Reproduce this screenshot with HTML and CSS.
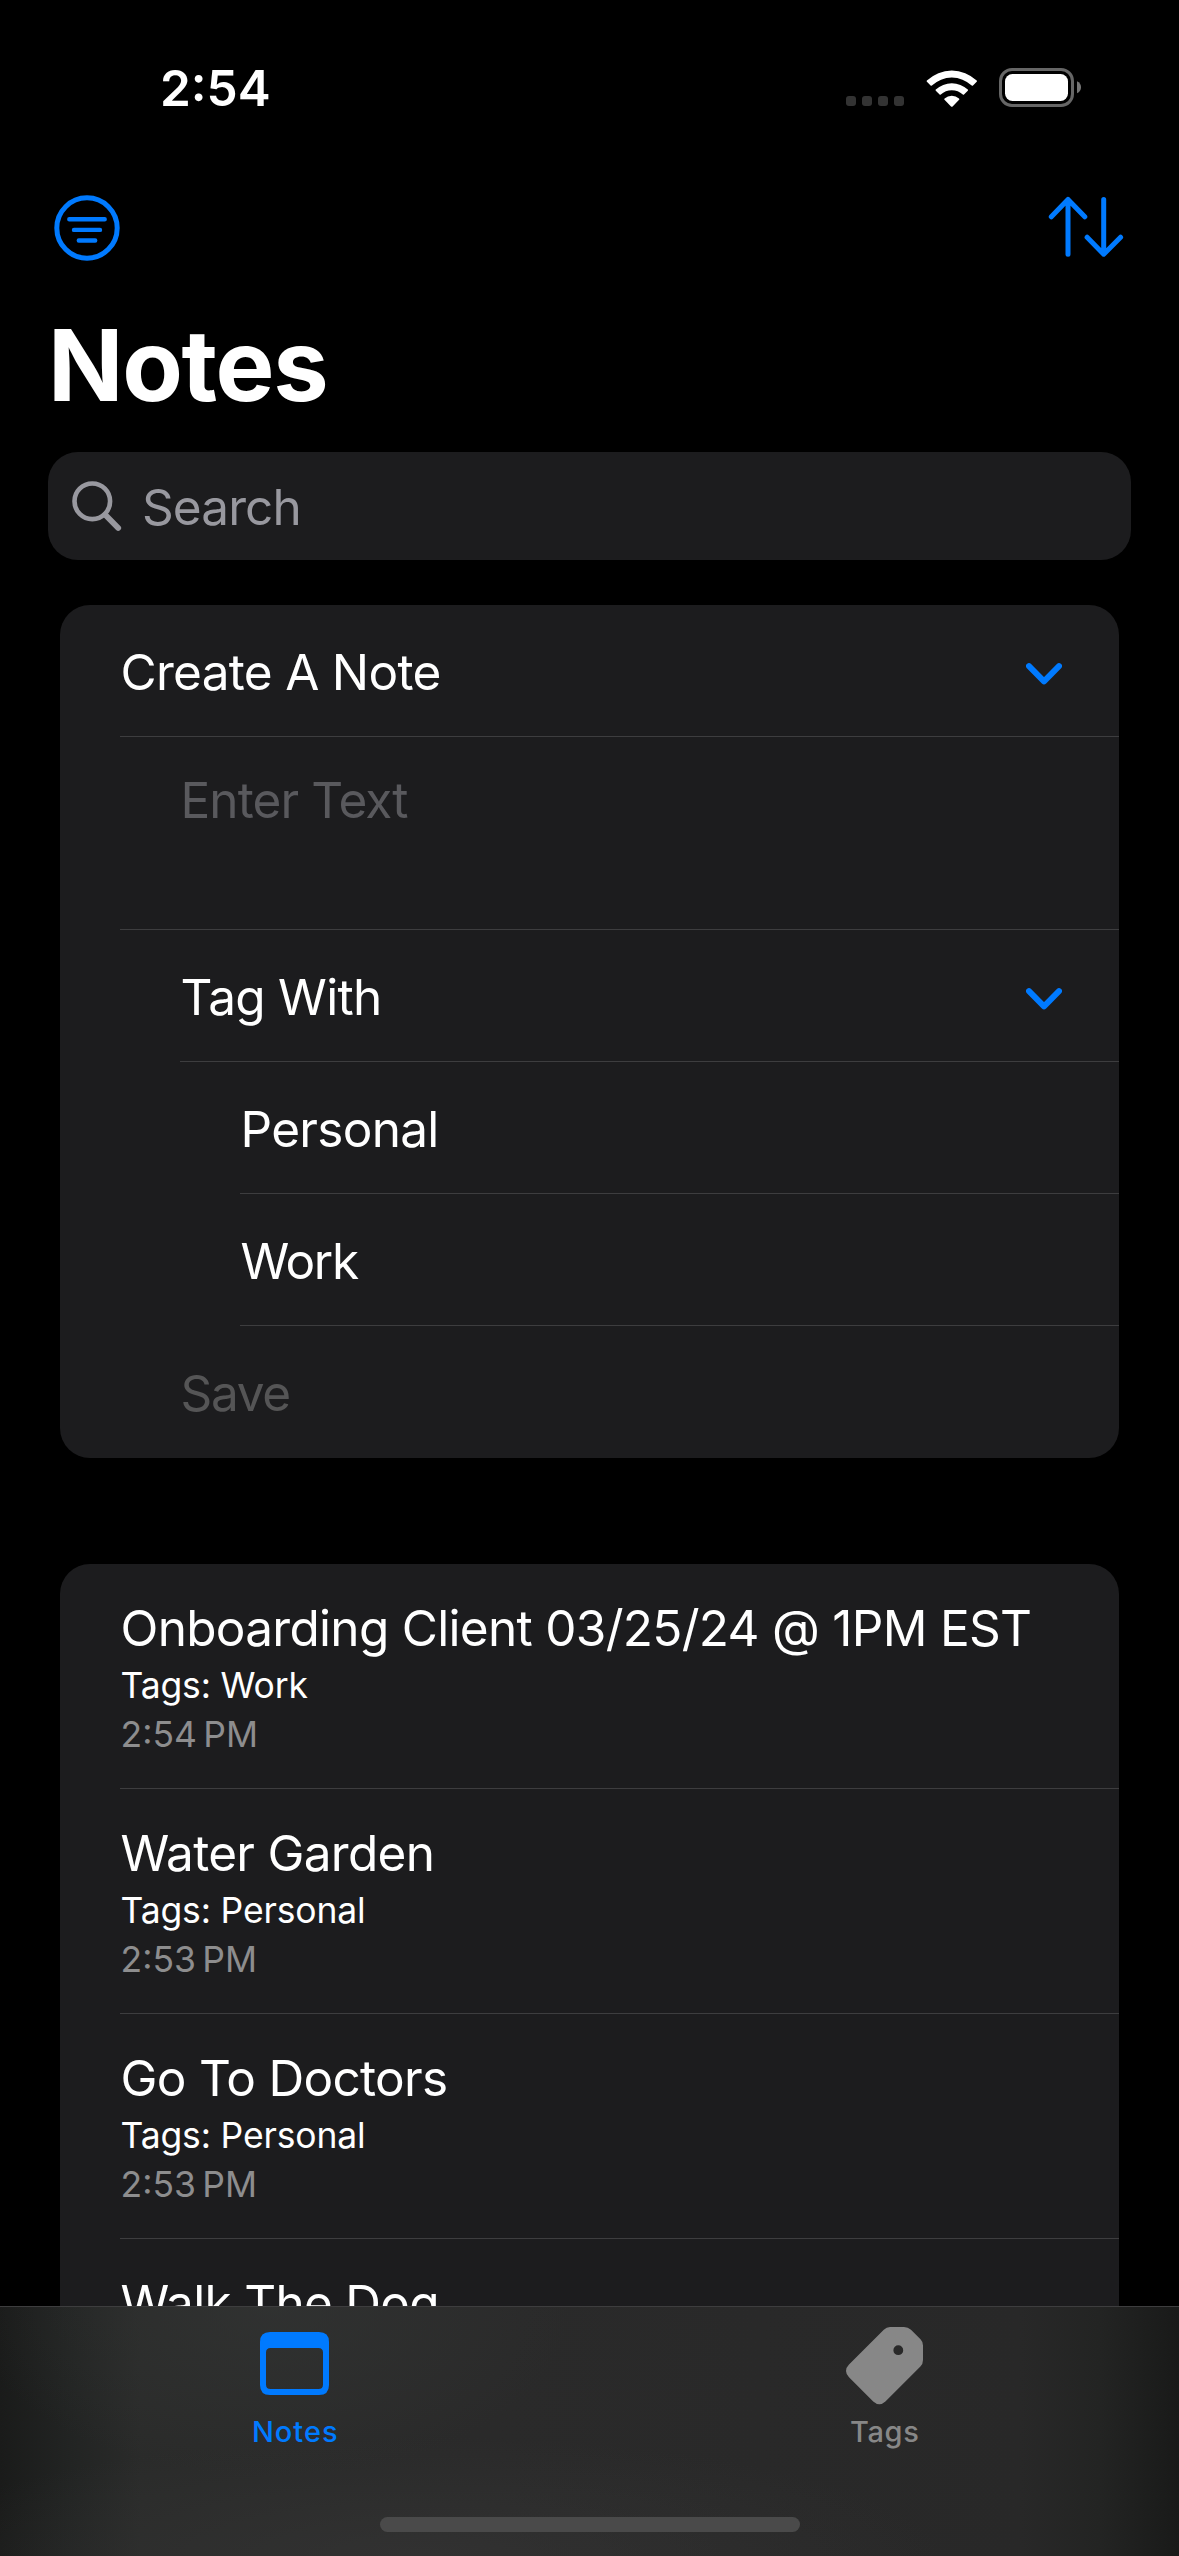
FILE: index.html
```html
<!DOCTYPE html>
<html lang="en">
<head>
<meta charset="utf-8">
<title>Notes</title>
<link rel="stylesheet" href="styles.css">
</head>
<body>
<div class="screen">
  <header class="status-bar">
    <span class="clock">2:54</span>
    <div class="indicators">
      <svg class="signal" width="58" height="10" viewBox="0 0 58 10">
        <rect width="10" height="10" rx="3"/><rect x="16" width="10" height="10" rx="3"/><rect x="32" width="10" height="10" rx="3"/><rect x="48" width="10" height="10" rx="3"/>
      </svg>
      <svg class="wifi" width="52" height="39" viewBox="0 0 52 39">
        <path d="M.9 11.6A36 36 0 0 1 50.7 11.6Q51.2 12.2 50.7 12.8L47 16.6Q46.4 17.1 45.7 16.5A29 29 0 0 0 5.9 16.5Q5.2 17.1 4.6 16.6L.9 12.8Q.4 12.2 .9 11.6Z"/>
        <path d="M9.8 20.6A23.5 23.5 0 0 1 41.8 20.6Q42.4 21.2 41.8 21.8L38 25.6Q37.4 26.1 36.8 25.6A16 16 0 0 0 14.8 25.6Q14.2 26.1 13.6 25.6L9.8 21.8Q9.2 21.2 9.8 20.6Z"/>
        <path d="M18.6 29.4A11 11 0 0 1 33 29.4Q33.8 30.1 33.1 30.8L26.6 37.4Q25.8 38.2 25 37.4L18.5 30.8Q17.8 30.1 18.6 29.4Z"/>
      </svg>
      <svg class="battery" width="82" height="39" viewBox="0 0 82 39">
        <rect class="shell" x="1.5" y="1.5" width="72" height="36" rx="11.5"/>
        <rect x="6" y="6" width="63" height="27" rx="7.5" fill="#fff"/>
        <path d="M78 13.3Q82 15.2 82 19.3T78 25.3Z" fill="#757575"/>
      </svg>
    </div>
  </header>

  <nav class="toolbar">
    <svg width="66" height="66" viewBox="0 0 66 66">
      <circle cx="33" cy="33" r="30.2"/>
      <path d="M15.3 24.3H50.7M20 34.9H46M24.8 45.5H41.2" stroke-width="4.4"/>
    </svg>
    <svg class="sort" width="76" height="62" viewBox="0 0 76 62">
      <path d="M20 58.2V4M3.3 20.8L20 3.4L36.8 20.8M55.7 3.4V57M39.1 41.2L55.7 58.2L72.6 41.2"/>
    </svg>
  </nav>

  <h1 class="title">Notes</h1>

  <div class="search">
    <svg width="50" height="51" viewBox="0 0 50 51">
      <circle cx="20.3" cy="20.3" r="17.8" stroke-width="4.6"/>
      <path d="M33.2 33.8L46.2 47" stroke-width="5.8"/>
    </svg>
    <span>Search</span>
  </div>

  <main class="content">
    <section class="card">
      <div class="row"><span>Create A Note</span>
        <svg class="chevron" width="36" height="22" viewBox="0 0 36 22"><path d="M3 3.2L18 18.3L33 3.2"/></svg>
      </div>
      <div class="row field"><span>Enter Text</span></div>
      <div class="row inset"><span>Tag With</span>
        <svg class="chevron" width="36" height="22" viewBox="0 0 36 22"><path d="M3 3.2L18 18.3L33 3.2"/></svg>
      </div>
      <div class="row deep"><span>Personal</span></div>
      <div class="row deep"><span class="snug">Work</span></div>
      <div class="row inset disabled"><span class="snug">Save</span></div>
    </section>

    <section class="card notes">
      <article class="note"><h2>Onboarding Client 03/25/24 @ 1PM EST</h2><p class="tags">Tags: Work</p><p class="time">2:54&#8239;PM</p></article>
      <article class="note"><h2>Water Garden</h2><p class="tags">Tags: Personal</p><p class="time">2:53&#8239;PM</p></article>
      <article class="note"><h2>Go To Doctors</h2><p class="tags">Tags: Personal</p><p class="time">2:53&#8239;PM</p></article>
      <article class="note"><h2>Walk The Dog</h2></article>
    </section>
  </main>

  <footer class="tab-bar">
    <div class="tabs">
      <div class="tab active">
        <svg width="77" height="78" viewBox="0 0 77 78">
          <path fill-rule="evenodd" d="M14 5H63Q73 5 73 15V58Q73 68 63 68H14Q4 68 4 58V15Q4 5 14 5ZM14.500 21Q10 21 10 25.500V57.500Q10 62 14.500 62H62.500Q67 62 67 57.500V25.500Q67 21 62.500 21Z"/>
        </svg>
        <span>Notes</span>
      </div>
      <div class="tab">
        <svg width="77" height="78" viewBox="0 0 77 78">
          <path fill-rule="evenodd" d="M44 0H58Q62 0 65 2.800L74.500 12.300Q77 14.800 77 18.500V33Q77 37 74.400 39.600L39.400 74.500Q33.400 80 27.200 74.500L3 50.300Q-3 43.800 3 37.600L37.800 2.800Q40.500 0 44 0ZM52.300 18.300a4.900 4.900 0 1 0 0 9.800a4.900 4.900 0 1 0 0-9.800Z"/>
        </svg>
        <span>Tags</span>
      </div>
    </div>
    <div class="home-indicator"></div>
  </footer>
</div>
</body>
</html>
```
FILE: styles.css
```css
* { box-sizing: border-box; }

body {
  margin: 0;
  background: #000;
  color: #fff;
  font-family: Inter, "Liberation Sans", sans-serif;
  font-size: 49.5px;
  letter-spacing: -0.7px;
}

h1, h2, p { margin: 0; font-weight: 400; }
svg { display: block; flex: none; }

.screen {
  width: 1179px;
  height: 2556px;
  display: flex;
  flex-direction: column;
  overflow: hidden;
}

.status-bar {
  height: 176px;
  flex: none;
  display: flex;
  justify-content: space-between;
  align-items: flex-start;
  padding: 68px 98px 0 160px;
}
.clock {
  font-weight: 600;
  letter-spacing: 0;
  line-height: 40px;
}
.indicators { display: flex; }
.signal { margin: 28px 21.5px 0 0; fill: #333; }
.wifi { margin: 1px 21.5px 0 0; fill: #fff; }
.shell { fill: none; stroke: #666; stroke-width: 3; }

.toolbar {
  height: 134px;
  flex: none;
  display: flex;
  justify-content: space-between;
  align-items: flex-start;
  padding: 18.5px 55px 0 53.5px;
  fill: none;
  stroke: #007aff;
  stroke-width: 5;
  stroke-linecap: round;
  stroke-linejoin: round;
}
.sort { margin-top: 1.5px; }

.title {
  margin-left: 48px;
  height: 142px;
  flex: none;
  font-size: 99px;
  font-weight: 700;
  line-height: 110px;
  letter-spacing: -1.3px;
}

.search {
  height: 108px;
  flex: none;
  margin: 0 48px 45px;
  display: flex;
  align-items: center;
  gap: 20px;
  padding-left: 24px;
  border-radius: 30px;
  background: #1c1c1e;
  color: #98989f;
  letter-spacing: -0.9px;
}
.search svg { fill: none; stroke: #98989f; stroke-linecap: round; }
.search span { padding-top: 2px; }

.content {
  flex: 1;
  min-height: 0;
  overflow: hidden;
  display: flex;
  flex-direction: column;
  gap: 106px;
  padding: 0 60px;
}
.card {
  flex: none;
  background: #1c1c1e;
  border-radius: 30px;
}
.row {
  height: 132px;
  margin-left: 60px;
  padding: 2px 57px 0 0.5px;
  display: flex;
  justify-content: space-between;
  align-items: center;
  border-bottom: 1px solid #3d3d3f;
}
.field {
  height: 193px;
  align-items: flex-start;
  padding: 33px 0 0 60.5px;
  line-height: 60px;
  color: #59595d;
  letter-spacing: -0.9px;
}
.inset { margin-left: 120px; }
.deep { margin-left: 180px; }
.disabled { border: 0; color: #555556; }
.snug { letter-spacing: -1.3px; }
.chevron {
  margin-top: 5px;
  fill: none;
  stroke: #007aff;
  stroke-width: 6;
  stroke-linecap: round;
  stroke-linejoin: round;
}

.note {
  height: 225px;
  margin-left: 60px;
  padding: 34px 0 0 0.5px;
  border-bottom: 1px solid #3d3d3f;
}
.note h2 { font-size: 49.5px; line-height: 60px; white-space: nowrap; }
.tags, .time { font-size: 35.5px; }
.tags { margin-top: 3px; line-height: 50px; letter-spacing: -0.15px; }
.time { line-height: 48px; letter-spacing: 0; color: #8d8d8e; }

.tab-bar {
  height: 250px;
  flex: none;
  display: flex;
  flex-direction: column;
  align-items: center;
  border-top: 1px solid #3d3d3e;
  background:
    radial-gradient(ellipse 300px 170px at 270px 0, rgba(52, 54, 53, 0.6), transparent),
    radial-gradient(ellipse 520px 120px at 420px 250px, rgba(54, 54, 54, 0.6), transparent),
    linear-gradient(to right, #1a1b1a 0, #222423 70px, #2a2b2a 140px, #2a2a2a 500px, #282828 1020px, #232423 1100px, #191a19 1179px);
}
.tabs { width: 100%; height: 210px; display: flex; }
.tab {
  flex: 1;
  display: flex;
  flex-direction: column;
  align-items: center;
  padding-top: 20px;
  color: #878787;
  font-size: 29px;
  font-weight: 500;
  letter-spacing: 0.6px;
}
.tab svg { fill: currentColor; }
.tab span { line-height: 40px; margin: 7px 0 0 1px; }
.active { color: #007aff; letter-spacing: 1px; }
.home-indicator { width: 420px; height: 15px; border-radius: 8px; background: #4a4a4a; }
```
